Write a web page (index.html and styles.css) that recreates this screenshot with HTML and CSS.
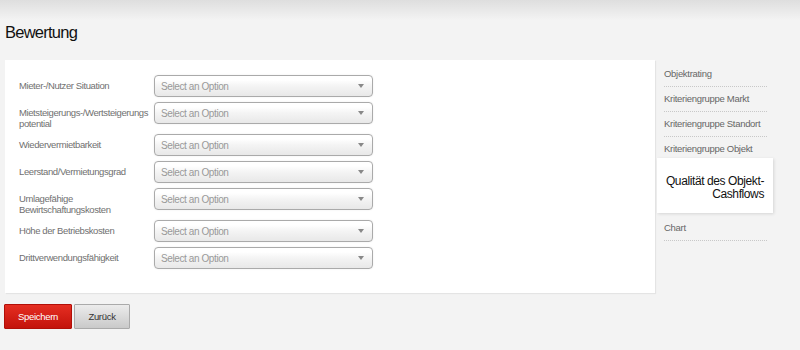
FILE: index.html
```html
<!DOCTYPE html>
<html lang="de">
<head>
<meta charset="utf-8">
<title>Bewertung</title>
<link rel="stylesheet" href="styles.css">
</head>
<body>
<h1 class="title">Bewertung</h1>
<div class="main">
  <div class="panel">
    <div class="row"><div class="label">Mieter-/Nutzer Situation</div><div class="select"><span>Select an Option</span><i class="arrow"></i></div></div>
    <div class="row"><div class="label">Mietsteigerungs-/Wertsteigerungs potential</div><div class="select"><span>Select an Option</span><i class="arrow"></i></div></div>
    <div class="row"><div class="label">Wiedervermietbarkeit</div><div class="select"><span>Select an Option</span><i class="arrow"></i></div></div>
    <div class="row"><div class="label">Leerstand/Vermietungsgrad</div><div class="select"><span>Select an Option</span><i class="arrow"></i></div></div>
    <div class="row"><div class="label">Umlagefähige Bewirtschaftungskosten</div><div class="select"><span>Select an Option</span><i class="arrow"></i></div></div>
    <div class="row"><div class="label">Höhe der Betriebskosten</div><div class="select"><span>Select an Option</span><i class="arrow"></i></div></div>
    <div class="row"><div class="label">Drittverwendungsfähigkeit</div><div class="select"><span>Select an Option</span><i class="arrow"></i></div></div>
  </div>
  <ul class="nav">
    <li class="nav-item">Objektrating</li>
    <li class="nav-item">Kriteriengruppe Markt</li>
    <li class="nav-item">Kriteriengruppe Standort</li>
    <li class="nav-item nav-item--last">Kriteriengruppe Objekt</li>
    <li class="nav-active">Qualität des Objekt-Cashflows</li>
    <li class="nav-item nav-item--after">Chart</li>
  </ul>
</div>
<div class="actions">
  <button class="btn btn-primary">Speichern</button>
  <button class="btn btn-default">Zurück</button>
</div>
</body>
</html>
```
FILE: styles.css
```css
html, body {
  margin: 0;
  padding: 0;
}
body {
  background: linear-gradient(#dedede, #f3f3f3 20px) no-repeat, #f3f3f3;
  font-family: "Liberation Sans", Arial, sans-serif;
  width: 800px;
  height: 350px;
  overflow: hidden;
}
.title {
  margin: 0;
  padding: 21px 0 0 5px;
  font-size: 16.5px;
  letter-spacing: -0.75px;
  line-height: 22px;
  font-weight: normal;
  color: #111;
  height: 22px;
}
.main {
  display: flex;
  align-items: flex-start;
  margin-top: 17px;
  padding-left: 5px;
}
.panel {
  width: 650px;
  box-sizing: border-box;
  background: #fff;
  padding: 15px 0 24px 14px;
  box-shadow: 1px 1px 1px rgba(0,0,0,0.06);
  display: flex;
  flex-direction: column;
  gap: 5px;
}
.row {
  display: flex;
  align-items: flex-start;
}
.label {
  width: 135px;
  flex: none;
  padding-top: 5px;
  font-size: 9.5px;
  letter-spacing: -0.4px;
  line-height: 11px;
  color: #707070;
}
.select {
  width: 219px;
  height: 22px;
  box-sizing: border-box;
  border: 1px solid #aaa;
  border-radius: 4px;
  background: linear-gradient(#ffffff 20%, #f4f4f4 50%, #e8e8e8);
  box-shadow: 0 0 2px rgba(0,0,0,0.08);
  display: flex;
  align-items: center;
  justify-content: space-between;
  padding: 0 8px 0 6px;
  font-size: 10px;
  letter-spacing: -0.4px;
  color: #999;
}
.arrow {
  width: 0;
  height: 0;
  border-left: 3px solid transparent;
  border-right: 3px solid transparent;
  border-top: 4px solid #888;
}
.nav {
  list-style: none;
  margin: 0 0 0 2px;
  padding: 2px 0 0;
  width: 116px;
  font-size: 9.5px;
  letter-spacing: -0.3px;
  color: #666;
}
.nav-item {
  margin-left: 7px;
  width: 103px;
  line-height: 24px;
  border-bottom: 1px dotted #c8c8c8;
}
.nav-item--last {
  border-bottom: none;
}
.nav-item--after {
  margin-top: 3px;
}
.nav-active {
  margin-top: -3px;
  background: #fff;
  box-shadow: 1px 1px 3px rgba(0,0,0,0.12);
  font-size: 12px;
  letter-spacing: -0.4px;
  line-height: 13px;
  color: #111;
  text-align: right;
  padding: 17px 9px 12px 8px;
}
.actions {
  display: flex;
  gap: 2px;
  margin-top: 11px;
  padding-left: 4px;
}
.btn {
  height: 25px;
  box-sizing: border-box;
  font-family: inherit;
  font-size: 9.5px;
  letter-spacing: -0.3px;
  padding: 0;
  border-radius: 1px;
  cursor: pointer;
}
.btn-primary {
  width: 68px;
  color: #fff;
  border: 1px solid #b10f08;
  background: linear-gradient(#e52e22, #c3130b);
}
.btn-default {
  width: 56px;
  color: #333;
  border: 1px solid #aaa;
  background: linear-gradient(#ececec, #c9c9c9);
}
```
